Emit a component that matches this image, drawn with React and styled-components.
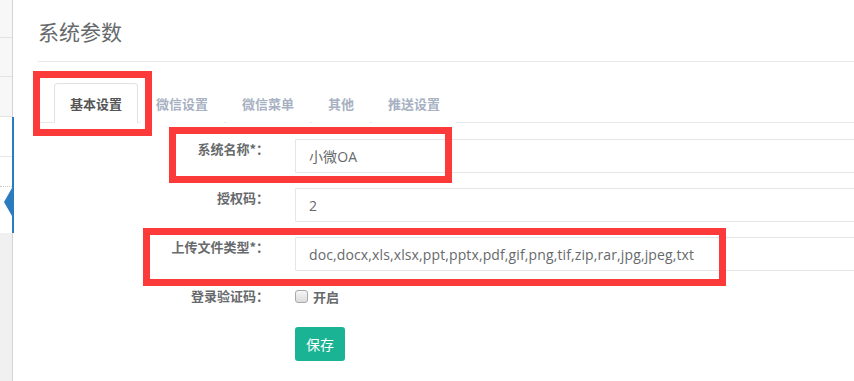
import styled, { createGlobalStyle } from "styled-components";

const GlobalStyle = createGlobalStyle`
    html, body {
        margin: 0;
        padding: 0;
        background: #fff;
    }
    body {
        font-family: "Open Sans", "Noto Sans CJK SC", sans-serif;
        color: #676a6c;
    }
`

const Page = styled.div`
    position: relative;
    display: flex;
    width: 854px;
    height: 381px;
    overflow: hidden;
`

/* sidebar strip cut off at the left edge */
const Sidebar = styled.aside`
    flex: none;
    width: 12px;
    display: flex;
    flex-direction: column;
    background: #f0f0f0;
    border-right: 1px solid #d4d4d4;
`
const MenuItem = styled.div`
    height: ${props => props.h}px;
    flex: none;
    background: #f7f7f7;
    border-bottom: 1px solid #e3e3e3;
`
const ActiveItem = styled.div`
    position: relative;
    flex: none;
    margin-right: -2px;
    background: #fff;
    border-right: 2px solid #2b7bc0;
    height: 116px;
`
const SubItem = styled.div`
    height: ${props => props.h}px;
    border-bottom: 1px ${props => props.dotted ? "dotted #c8c8c8" : "solid #e7e7e7"};
`
const Arrow = styled.span`
    position: absolute;
    right: 0;
    top: 71px;
    width: 0;
    height: 0;
    border-top: 14px solid transparent;
    border-bottom: 14px solid transparent;
    border-right: 8px solid #2b7bc0;
`

const Main = styled.main`
    flex: 1;
    min-width: 0;
    overflow: hidden;
    padding-left: 25px;
`
const Header = styled.div`
    height: 62px;
    box-sizing: border-box;
    padding-top: 21px;
    border-bottom: 1px solid #e7eaec;
`
const Title = styled.h2`
    margin: 0;
    font-size: 21px;
    line-height: 22px;
    font-weight: 400;
    color: #676a6c;
`

const TabList = styled.ul`
    display: flex;
    margin: 21px 0 0;
    padding: 0 0 0 16px;
    list-style: none;
    border-bottom: 1px solid #e7eaec;
`
const Tab = styled.li`
    height: 38px;
    display: flex;
    align-items: center;
    padding: 0 15px;
    margin: 0 2px -1px 0;
    font-size: 13px;
    font-weight: 700;
    color: ${props => props.active ? "#555" : "#a7b1c2"};
    background: #fff;
    border: 1px solid ${props => props.active ? "#e2e2e2" : "transparent"};
    border-bottom-color: ${props => props.active ? "#fff" : "transparent"};
    border-radius: 4px 4px 0 0;
`

const Form = styled.form`
    padding-top: 16px;
`
const FormRow = styled.div`
    display: grid;
    grid-template-columns: 231px 600px;
    column-gap: 26px;
    align-items: start;
    margin-bottom: ${props => props.gap ?? 15}px;
`
const Label = styled.label`
    text-align: right;
    font-family: "Noto Sans CJK SC", sans-serif;
    font-size: 13px;
    line-height: 20px;
    font-weight: 700;
    color: #676a6c;
`
const TextInput = styled.input`
    box-sizing: border-box;
    width: 100%;
    height: 34px;
    padding: 6px 13px;
    border: 1px solid #e5e6e7;
    border-radius: 1px;
    font-family: "Open Sans", "Noto Sans CJK SC", sans-serif;
    font-size: 14px;
    letter-spacing: 0.12px;
    color: #676a6c;
    background: #fff;
    outline: none;
`
const CheckLine = styled.div`
    display: flex;
    align-items: center;
    gap: 5px;
    height: 20px;
    font-size: 13px;
    font-weight: 700;
    color: #676a6c;
`
const Check = styled.input`
    appearance: none;
    margin: 0;
    width: 13px;
    height: 13px;
    border: 1px solid #a9a9a9;
    border-radius: 3px;
    background: linear-gradient(#f6f6f6, #dcdcdc);
`
const SaveButton = styled.button`
    grid-column: 2;
    justify-self: start;
    height: 34px;
    padding: 0 11px;
    border: none;
    border-radius: 3px;
    background: #1ab394;
    color: #fff;
    font-family: "Open Sans", "Noto Sans CJK SC", sans-serif;
    font-size: 14px;
`

/* red annotation frames drawn over the screenshot */
const Mark = styled.div`
    position: absolute;
    box-sizing: border-box;
    left: ${props => props.x}px;
    top: ${props => props.y}px;
    width: ${props => props.w}px;
    height: ${props => props.h}px;
    border: 7px solid #fd3a3a;
    pointer-events: none;
`

const tabs = ["基本设置", "微信设置", "微信菜单", "其他", "推送设置"];

const App = () => {
    return (
        <Page>
            <GlobalStyle />
            <Sidebar>
                <MenuItem h={37} />
                <MenuItem h={38} />
                <MenuItem h={39} />
                <ActiveItem>
                    <SubItem h={39} />
                    <SubItem h={29} dotted />
                    <Arrow />
                </ActiveItem>
            </Sidebar>
            <Main>
                <Header>
                    <Title>系统参数</Title>
                </Header>
                <TabList>
                    {tabs.map((t, i) => <Tab key={t} active={i === 0}>{t}</Tab>)}
                </TabList>
                <Form onSubmit={e => e.preventDefault()}>
                    <FormRow>
                        <Label>系统名称*：</Label>
                        <TextInput readOnly value="小微OA" />
                    </FormRow>
                    <FormRow>
                        <Label>授权码：</Label>
                        <TextInput readOnly value="2" />
                    </FormRow>
                    <FormRow>
                        <Label>上传文件类型*：</Label>
                        <TextInput readOnly value="doc,docx,xls,xlsx,ppt,pptx,pdf,gif,png,tif,zip,rar,jpg,jpeg,txt" />
                    </FormRow>
                    <FormRow gap={21}>
                        <Label>登录验证码：</Label>
                        <CheckLine>
                            <Check type="checkbox" readOnly />
                            开启
                        </CheckLine>
                    </FormRow>
                    <FormRow>
                        <SaveButton type="submit">保存</SaveButton>
                    </FormRow>
                </Form>
            </Main>
            <Mark x={33} y={71} w={119} h={65} />
            <Mark x={169} y={127} w={283} h={56} />
            <Mark x={143} y={228} w={583} h={58} />
        </Page>
    );
}

export default App;
